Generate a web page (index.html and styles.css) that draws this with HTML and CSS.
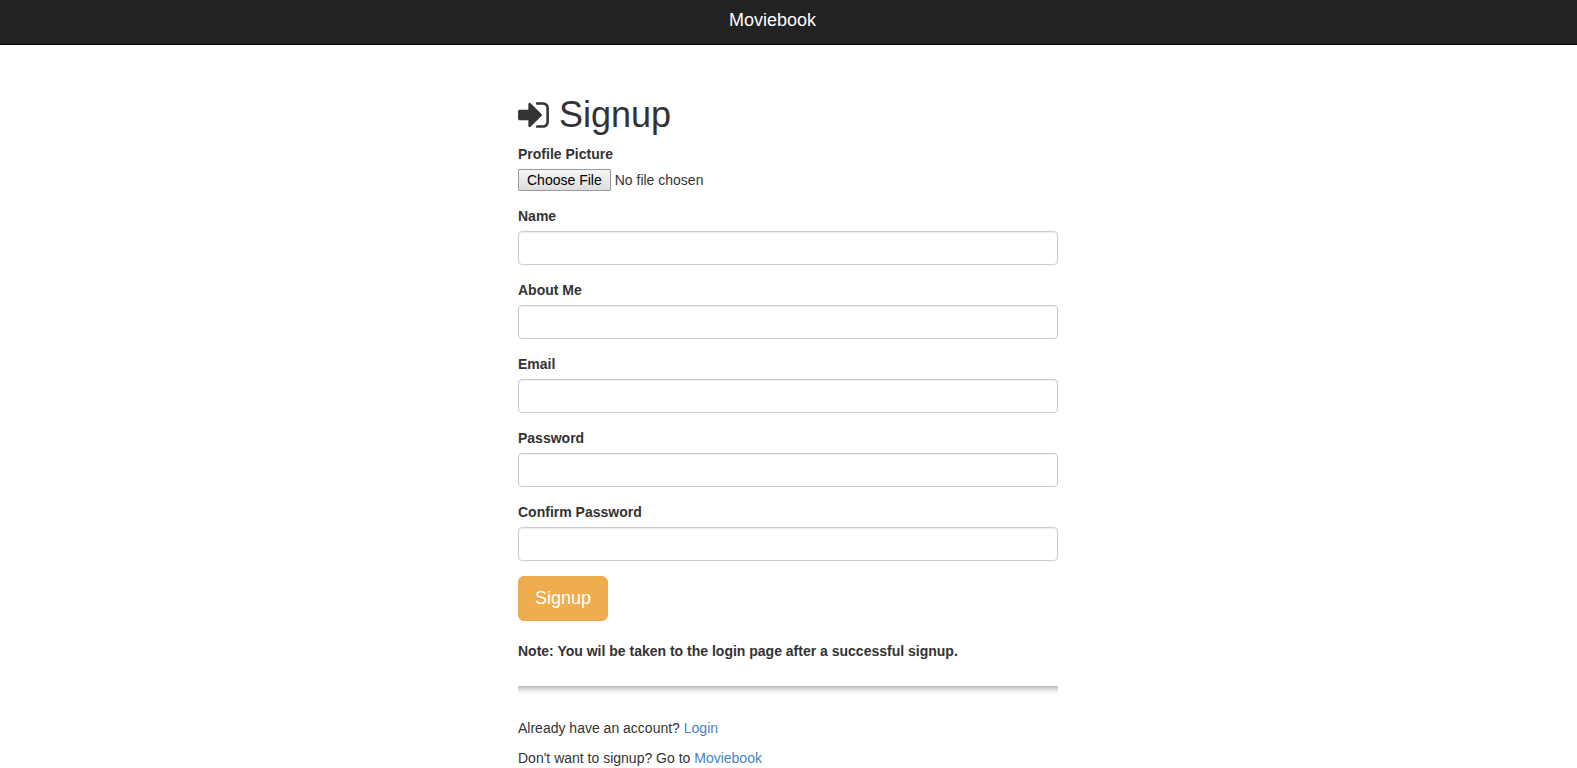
FILE: index.html
```
<!DOCTYPE html>
<html lang="en">
<head>
<meta charset="utf-8">
<meta name="viewport" content="width=device-width, initial-scale=1">
<title>Moviebook - Signup</title>
<link rel="stylesheet" href="styles.css">
</head>
<body>
<nav class="navbar"><a class="brand" href="#">Moviebook</a></nav>
<main class="page">
  <h1 class="title">
    <svg class="title-icon" viewBox="128 0 1536 1792" aria-hidden="true"><path d="M1312 896q0 26-19 45l-544 544q-19 19-45 19t-45-19-19-45v-288h-448q-26 0-45-19t-19-45v-384q0-26 19-45t45-19h448v-288q0-26 19-45t45-19 45 19l544 544q19 19 19 45zm352-352v704q0 119-84.500 203.500t-203.500 84.500h-320q-13 0-22.500-9.500t-9.500-22.500q0-4-1-20t-.5-26.500 3-23.500 10-19.500 20.500-6.500h320q66 0 113-47t47-113v-704q0-66-47-113t-113-47h-312l-11.500-1-11.500-3-8-5.500-7-9-2-13.500q0-4-1-20t-.5-26.500 3-23.500 10-19.500 20.500-6.500h320q119 0 203.500 84.500t84.500 203.500z"/></svg>
    <span>Signup</span>
  </h1>
  <form class="form">
    <div class="group">
      <label class="label" for="picture">Profile Picture</label>
      <input class="file" type="file" id="picture">
    </div>
    <div class="group">
      <label class="label" for="name">Name</label>
      <input class="control" type="text" id="name">
    </div>
    <div class="group">
      <label class="label" for="about">About Me</label>
      <input class="control" type="text" id="about">
    </div>
    <div class="group">
      <label class="label" for="email">Email</label>
      <input class="control" type="email" id="email">
    </div>
    <div class="group">
      <label class="label" for="password">Password</label>
      <input class="control" type="password" id="password">
    </div>
    <div class="group">
      <label class="label" for="confirm">Confirm Password</label>
      <input class="control" type="password" id="confirm">
    </div>
    <button class="submit" type="submit">Signup</button>
  </form>
  <p class="note">Note: You wil be taken to the login page after a successful signup.</p>
  <hr class="divider">
  <p class="text">Already have an account? <a class="link" href="#">Login</a></p>
  <p class="text">Don't want to signup? Go to <a class="link" href="#">Moviebook</a></p>
</main>
</body>
</html>
```
FILE: styles.css
```
* {
  box-sizing: border-box;
}

body {
  margin: 0;
  background: #fff;
  color: #333;
  font: 14px/20px "Liberation Sans", Arial, sans-serif;
}

.navbar {
  display: flex;
  justify-content: center;
  height: 45px;
  padding: 10px 32px 0 0;
  background: #222;
  border-bottom: 1px solid #080808;
}

.brand {
  color: #fff;
  font-size: 18px;
  line-height: 20px;
  text-decoration: none;
}

.page {
  max-width: 541px;
  margin: 0 auto;
  padding: 50px 1px 0 0;
}

.title {
  display: flex;
  align-items: center;
  gap: 10px;
  margin: 0 0 9px;
  font-size: 36px;
  font-weight: 400;
  line-height: 40px;
}

.title-icon {
  width: 31px;
  height: 36px;
  fill: currentColor;
}

.group {
  margin-bottom: 15px;
}

.label {
  display: block;
  margin-bottom: 5px;
  font-weight: 700;
}

.file {
  display: block;
  width: 100%;
  height: 22px;
  font: inherit;
  color: #333;
}

.file::file-selector-button {
  height: 22px;
  margin-right: 4px;
  padding: 0 8px;
  border: 1px solid #999;
  border-radius: 1px;
  background: linear-gradient(#f6f6f6, #dedede);
  color: #000;
  font: inherit;
}

.control {
  display: block;
  width: 100%;
  height: 34px;
  padding: 6px 12px;
  border: 1px solid #ccc;
  border-radius: 4px;
  background: #fff;
  box-shadow: inset 0 1px 1px rgba(0, 0, 0, 0.075);
  color: #555;
  font: inherit;
}

.submit {
  display: block;
  padding: 10px 16px;
  border: 1px solid #eea94a;
  border-radius: 6px;
  background: #f0ad4e;
  color: #fff;
  font: inherit;
  font-size: 18px;
  line-height: 23px;
}

.note {
  margin: 20px 0 25px;
  font-weight: 700;
}

.divider {
  height: 12px;
  margin: 0 0 20px;
  border: 0;
  background: linear-gradient(#b8b8b8, #dadada 3px, #f4f4f4 6px, #fff 10px);
}

.text {
  margin: 0 0 10px;
}

.link {
  color: #4683c0;
  text-decoration: none;
}
```
